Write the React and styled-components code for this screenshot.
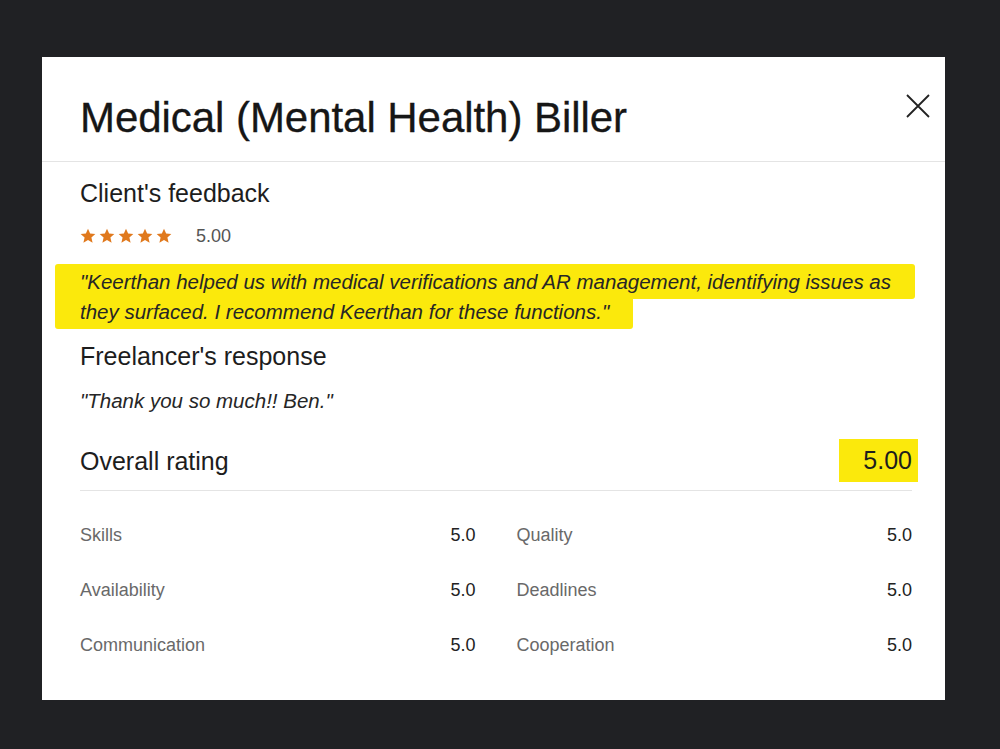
import React from "react"
import styled, { createGlobalStyle } from "styled-components"

const Global = createGlobalStyle`
  html, body {
    margin: 0;
    background: #202124;
  }
  body {
    font-family: "Liberation Sans", Arial, sans-serif;
    color: #1d1d1d;
  }
`

const Page = styled.div`
  width: 1000px;
  height: 749px;
  padding: 57px 0 0 42px;
  box-sizing: border-box;
`

const Modal = styled.div`
  width: 903px;
  height: 643px;
  background: #fff;
  display: flex;
  flex-direction: column;
`

const Header = styled.div`
  height: 105px;
  box-sizing: border-box;
  padding: 18px 15px 0 38px;
  display: flex;
  align-items: center;
  justify-content: space-between;
  border-bottom: 1px solid #e4e4e4;
`

const Title = styled.h1`
  margin: 0;
  font-size: 42px;
  font-weight: 400;
  letter-spacing: -0.05px;
  color: #161616;
  -webkit-text-stroke: 0.3px #161616;
`

const Close = styled.button`
  border: 0;
  background: none;
  padding: 0;
  width: 24px;
  height: 24px;
  margin-top: -24px;
  cursor: pointer;
  display: flex;
`

const Body = styled.div`
  padding: 16px 33px 0 38px;
  display: flex;
  flex-direction: column;
`

const Heading = styled.h2`
  margin: 0;
  font-size: 25px;
  font-weight: 400;
  line-height: 30px;
  color: #1d1d1d;
`

const RatingLine = styled.div`
  display: flex;
  align-items: center;
  gap: 24px;
  margin-top: 16px;
  height: 24px;
`

const Stars = styled.div`
  display: flex;
  gap: 3px;
`

const Score = styled.span`
  font-size: 18px;
  color: #555;
`

const Quote = styled.p`
  margin: ${(p) => p.$mt}px 0 0;
  font-size: 20.5px;
  font-style: italic;
  line-height: 30px;
  color: #262626;
`

const Marker = styled.span`
  background: #fbe90c;
  padding: 6px 24px 6px 25px;
  margin-left: -25px;
  -webkit-box-decoration-break: clone;
  box-decoration-break: clone;
  border-radius: 3px;
`

const Overall = styled.div`
  margin-top: 23px;
  display: flex;
  align-items: center;
  justify-content: space-between;
  padding-bottom: 8px;
  border-bottom: 1px solid #e4e4e4;
`

const BigScore = styled.span`
  font-size: 25px;
  color: #1d1d1d;
  background: #fbe90c;
  padding: 7px 6px 7px 24px;
  margin-right: -6px;
`

const Grid = styled.div`
  display: grid;
  grid-template-columns: 1fr 1fr;
  column-gap: 41px;
  row-gap: 33px;
  margin-top: 33px;
`

const Row = styled.div`
  display: flex;
  justify-content: space-between;
  align-items: center;
  height: 22px;
  font-size: 18px;
`

const Label = styled.span`
  color: #696969;
`

const Value = styled.span`
  color: #222;
`

const Star = () => (
  <svg width="16" height="16" viewBox="0 0 24 24">
    <path
      fill="#e0791d"
      d="M12 1l3.2 7.3 7.8.7-5.9 5.2 1.8 7.8L12 17.9 5.1 22l1.8-7.8L1 9l7.8-.7z"
    />
  </svg>
)

const scores = [
  ["Skills", "5.0"],
  ["Quality", "5.0"],
  ["Availability", "5.0"],
  ["Deadlines", "5.0"],
  ["Communication", "5.0"],
  ["Cooperation", "5.0"],
]

const App = () => (
  <Page>
    <Global />
    <Modal>
      <Header>
        <Title>Medical (Mental Health) Biller</Title>
        <Close aria-label="Close">
          <svg width="24" height="24" viewBox="0 0 24 24">
            <path
              d="M1 1l22 22M23 1L1 23"
              stroke="#222"
              strokeWidth="1.8"
              fill="none"
            />
          </svg>
        </Close>
      </Header>
      <Body>
        <Heading>Client's feedback</Heading>
        <RatingLine>
          <Stars>
            <Star />
            <Star />
            <Star />
            <Star />
            <Star />
          </Stars>
          <Score>5.00</Score>
        </RatingLine>
        <Quote $mt={19}>
          <Marker>
            "Keerthan helped us with medical verifications and AR management,
            identifying issues as they surfaced. I recommend Keerthan for these
            functions."
          </Marker>
        </Quote>
        <Heading style={{ marginTop: 14 }}>Freelancer's response</Heading>
        <Quote $mt={15}>"Thank you so much!! Ben."</Quote>
        <Overall>
          <Heading as="span">Overall rating</Heading>
          <BigScore>5.00</BigScore>
        </Overall>
        <Grid>
          {scores.map(([label, value]) => (
            <Row key={label}>
              <Label>{label}</Label>
              <Value>{value}</Value>
            </Row>
          ))}
        </Grid>
      </Body>
    </Modal>
  </Page>
)

export default App
